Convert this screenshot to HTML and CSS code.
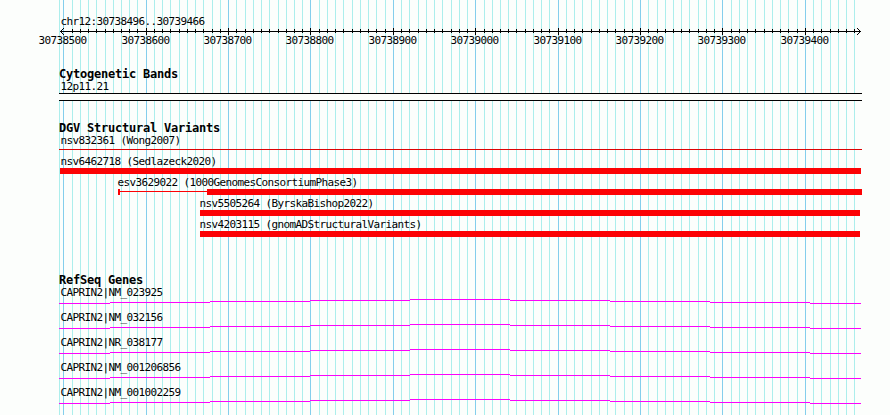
FILE: index.html
```html
<!DOCTYPE html>
<html lang="en">
<head>
<meta charset="utf-8">
<title>chr12:30738496..30739466</title>
<link rel="stylesheet" href="styles.css">
</head>
<body>
<main class="panel">
  <svg class="grid" width="890" height="415" aria-hidden="true"><path class="grid-minor" id="minor"/><path class="grid-major" id="major"/></svg>
  <svg class="ruler" width="890" height="68">
    <text x="60.5" y="25">chr12:30738496..30739466</text>
    <path class="axis" id="axis"/>
    <g id="labels"></g>
  </svg>
  <section class="track bands">
    <h2>Cytogenetic Bands</h2>
    <p>12p11.21</p>
    <div class="band"></div>
  </section>
  <section class="track variants">
    <h2>DGV Structural Variants</h2>
    <div class="variant hairline"><p>nsv832361 (Wong2007)</p><div class="thin"></div></div>
    <div class="variant full"><p>nsv6462718 (Sedlazeck2020)</p><div class="bar"></div></div>
    <div class="variant partial"><p>esv3629022 (1000GenomesConsortiumPhase3)</p><div class="range"><i class="cap"></i><i class="whisker"></i><i class="bar"></i></div></div>
    <div class="variant late"><p>nsv5505264 (ByrskaBishop2022)</p><div class="bar"></div></div>
    <div class="variant late"><p>nsv4203115 (gnomADStructuralVariants)</p><div class="bar"></div></div>
  </section>
  <section class="track genes">
    <h2>RefSeq Genes</h2>
    <div class="gene"><p>CAPRIN2|NM_023925</p><svg width="802" height="5"><use href="#intron"/></svg></div>
    <div class="gene"><p>CAPRIN2|NM_032156</p><svg width="802" height="5"><use href="#intron"/></svg></div>
    <div class="gene"><p>CAPRIN2|NR_038177</p><svg width="802" height="5"><use href="#intron"/></svg></div>
    <div class="gene"><p>CAPRIN2|NM_001206856</p><svg width="802" height="5"><use href="#intron"/></svg></div>
    <div class="gene"><p>CAPRIN2|NM_001002259</p><svg width="802" height="5"><defs><path id="intron" d="M0 4.5H51M51 3.5H151M151 2.5H251M251 1.5H351M351 .5H451M451 1.5H551M551 2.5H651M651 3.5H751M751 4.5H802"/></defs><use href="#intron"/></svg></div>
  </section>
</main>
<script src="script.js"></script>
</body>
</html>
```
FILE: styles.css
```css
body {
  margin: 0;
  background: #fcfefc;
  color: #000;
  font-family: "DejaVu Sans Mono", monospace;
}

.panel {
  position: relative;
  width: 890px;
  height: 415px;
  overflow: hidden;
}

svg {
  display: block;
  fill: none;
  shape-rendering: crispEdges;
}

.grid {
  position: absolute;
  inset: 0;
  z-index: -1;
}

.grid-minor { stroke: #aceeec; }
.grid-major { stroke: #84ceec; }
.axis { stroke: #000; }

.ruler text,
p {
  font-size: 11px;
  letter-spacing: -0.622px;
}

.ruler text { fill: #000; }

h2,
p {
  margin: 0;
  height: 12px;
  line-height: 12px;
  white-space: pre;
}

h2 {
  font-size: 12px;
  font-weight: bold;
  letter-spacing: -0.224px;
}

p {
  padding-left: 1.4px;
  line-height: 14px;
}

.track { padding-left: 59px; }

.band {
  box-sizing: border-box;
  width: 803px;
  height: 8px;
  margin-top: 1px;
  border: solid #000;
  border-width: 1px 0;
  background: #fcfefc;
}

.variants { margin-top: 21px; }

.variant {
  height: 19px;
  margin-bottom: 2px;
}

.thin {
  width: 803px;
  height: 1px;
  margin-top: 3px;
  background: #dc0204;
}

.bar {
  height: 6px;
  background: #fc0204;
}

.variant > .bar,
.range { margin-top: 1px; }

.full .bar {
  width: 801px;
  margin-left: 1px;
}

.partial { padding-left: 58px; }

.partial p,
.late p { padding-left: 0.4px; }

.range {
  display: flex;
  align-items: center;
  margin-left: 1px;
}

.cap {
  width: 2px;
  height: 6px;
  background: #fc0204;
}

.whisker {
  width: 87px;
  height: 1px;
  margin-bottom: 1px;
  background: #fc0204;
}

.range .bar { width: 655px; }

.late { padding-left: 140px; }

.late .bar {
  width: 660px;
  margin-left: 1px;
}

.genes { margin-top: 37px; }

.gene {
  height: 18px;
  margin-bottom: 7px;
}

.gene svg {
  margin-top: 1px;
  stroke: #fc02fc;
}
```
FILE: script.js
```js
// One grid line per 10 bp; every tenth line is a labelled 100 bp mark.
const ORIGIN = 63.824;
const STEP = 8.2389;
let minor = "M59.5 0V415";
let major = "";
let axis = "M60 31.5H861";
// Arrowheads: single-pixel diagonals, three steps above and below the axis.
for (let d = 1; d <= 3; d++) {
  for (const y of [31.5 - d, 31.5 + d]) {
    axis += `M${60 + d} ${y}h1M${860 - d} ${y}h1`;
  }
}
const labels = document.getElementById("labels");
for (let k = 0; k <= 96; k++) {
  const x = Math.floor(ORIGIN + k * STEP);
  if (k % 10 === 0) {
    major += `M${x + 0.5} 0V415`;
    if (k) axis += `M${x + 0.5} 28V35`;
    const text = document.createElementNS("http://www.w3.org/2000/svg", "text");
    text.setAttribute("x", x - 24.5);
    text.setAttribute("y", 44);
    text.textContent = 30738500 + k * 10;
    labels.append(text);
  } else {
    minor += `M${x + 0.5} 0V415`;
    axis += `M${x + 0.5} 29V33`;
  }
}
document.getElementById("minor").setAttribute("d", minor);
document.getElementById("major").setAttribute("d", major);
document.getElementById("axis").setAttribute("d", axis);
```
